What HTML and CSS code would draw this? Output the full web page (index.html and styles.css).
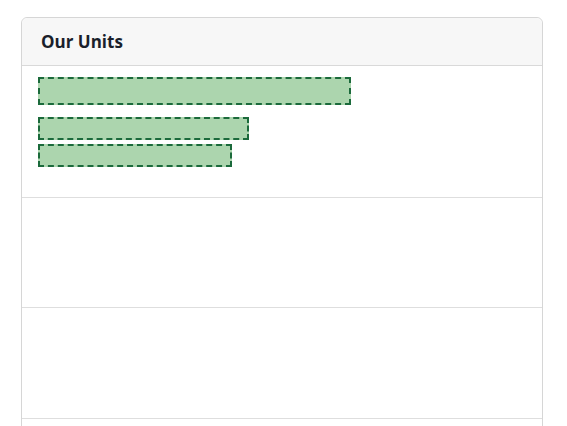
FILE: index.html
```html
<!DOCTYPE html>
<html>
<head>
<meta charset="utf-8">
<link rel="stylesheet" href="styles.css">
</head>
<body>
<div class="card">
  <div class="card-header"><h2 class="title">Our Units</h2></div>
  <div class="row row-first">
    <div class="ph ph-title"></div>
    <div class="ph ph-line ph-a"></div>
    <div class="ph ph-line ph-b"></div>
  </div>
  <div class="row"></div>
  <div class="row row-last"></div>
  <div class="row"></div>
</div>
</body>
</html>
```
FILE: styles.css
```css
html, body { margin: 0; padding: 0; background: #fff; }
body { padding: 17px 0 0 21px; font-family: "Open Sans", "Liberation Sans", sans-serif; overflow: hidden; height: 426px; box-sizing: border-box; }
.card {
  width: 522px;
  box-sizing: border-box;
  border: 1px solid #d6d6d6;
  border-radius: 6px 6px 0 0;
  background: #fff;
}
.card-header {
  height: 48px;
  box-sizing: border-box;
  background: #f7f7f7;
  border-bottom: 1px solid #d9d9d9;
  border-radius: 6px 6px 0 0;
  display: flex;
  align-items: center;
  padding: 1px 19px 0;
}
.title { margin: 0; font-size: 17px; font-weight: 700; color: #1a1f2b; line-height: 20px; }
.row { height: 110px; border-bottom: 1px solid #dedede; box-sizing: border-box; }
.row-last { height: 111px; }
.row-first { height: 132px; padding: 11px 16px 0; display: flex; flex-direction: column; align-items: flex-start; }
.ph { background: #acd5ae; border: 2px dashed #1b6a3b; box-sizing: border-box; }
.ph-title { width: 313px; height: 28px; margin-bottom: 12px; }
.ph-line { height: 23px; }
.ph-a { width: 211px; margin-bottom: 4px; }
.ph-b { width: 194px; }
```
